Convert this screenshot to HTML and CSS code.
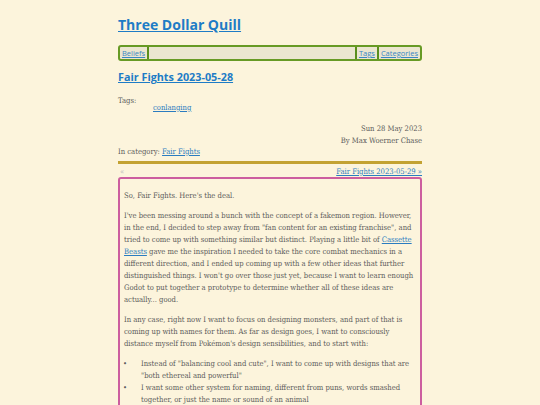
FILE: index.html
```html
<!DOCTYPE html>
<html lang="en">
<head>
<meta charset="utf-8">
<title>Fair Fights 2023-05-28 - Three Dollar Quill</title>
<link rel="stylesheet" href="styles.css">
</head>
<body>
<div class="page">
  <header class="site-header">
    <h1 class="site-title"><a href="#">Three Dollar Quill</a></h1>
    <nav class="site-nav">
      <a class="nav-item" href="#">Beliefs</a>
      <span class="nav-spacer"></span>
      <a class="nav-item sep" href="#">Tags</a>
      <a class="nav-item sep" href="#">Categories</a>
    </nav>
  </header>
  <article class="post">
    <h2 class="post-title"><a href="#">Fair Fights 2023-05-28</a></h2>
    <dl class="tags">
      <dt>Tags:</dt>
      <dd><a href="#">conlanging</a></dd>
    </dl>
    <div class="byline">
      <div>Sun 28 May 2023</div>
      <div>By Max Woerner Chase</div>
    </div>
    <div class="category">In category: <a href="#">Fair Fights</a></div>
    <div class="pager">
      <span class="prev">«</span>
      <a href="#">Fair Fights 2023-05-29 »</a>
    </div>
    <div class="content">
      <p>So, Fair Fights. Here's the deal.</p>
      <p>I've been messing around a bunch with the concept of a fakemon region. However, in the end, I decided to step away from "fan content for an existing franchise", and tried to come up with something similar but distinct. Playing a little bit of <a href="#">Cassette Beasts</a> gave me the inspiration I needed to take the core combat mechanics in a different direction, and I ended up coming up with a few other ideas that further distinguished things. I won't go over those just yet, because I want to learn enough Godot to put together a prototype to determine whether all of these ideas are actually... good.</p>
      <p>In any case, right now I want to focus on designing monsters, and part of that is coming up with names for them. As far as design goes, I want to consciously distance myself from Pokémon's design sensibilities, and to start with:</p>
      <ul>
        <li>Instead of "balancing cool and cute", I want to come up with designs that are "both ethereal and powerful"</li>
        <li>I want some other system for naming, different from puns, words smashed together, or just the name or sound of an animal</li>
      </ul>
    </div>
  </article>
</div>
</body>
</html>
```
FILE: styles.css
```css
html, body {
  margin: 0;
  padding: 0;
  background: #fcf4dc;
}
body {
  font-family: "DejaVu Serif", serif;
  font-stretch: condensed;
  color: #5b5b5b;
  font-size: 7.6px;
  line-height: 12px;
}
a {
  color: #2b7cc0;
}
.page {
  width: 304px;
  margin: 0 auto;
  padding-top: 14px;
}
.site-title {
  margin: 0;
  font-family: "Open Sans", sans-serif;
  font-stretch: normal;
  font-weight: 700;
  font-size: 14px;
  line-height: 22px;
}
.site-title a {
  color: #1e7cc6;
}
.site-nav {
  margin-top: 9px;
  display: flex;
  background: #ebe6d0;
  border: 2px solid #679a25;
  border-radius: 3px;
  height: 12px;
  align-items: stretch;
  font-family: "Open Sans", sans-serif;
  font-stretch: normal;
  font-size: 7.5px;
  line-height: 12px;
}
.nav-item {
  padding: 0 2px;
  color: #3a86c4;
}
.nav-spacer {
  flex: 1;
  border-left: 2px solid #5a8f1d;
  border-right: 2px solid #5a8f1d;
}
.nav-item.sep + .nav-item.sep {
  border-left: 2px solid #5a8f1d;
}
.post-title {
  margin: 8px 0 0;
  font-family: "Open Sans", sans-serif;
  font-stretch: normal;
  font-weight: 700;
  font-size: 10.8px;
  line-height: 16px;
}
.post-title a {
  color: #1e7cc6;
}
.tags {
  margin: 10px 0 0;
}
.tags dt {
  margin: 0;
}
.tags dd {
  margin: -5px 0 0 35px;
}
.byline {
  margin-top: 9px;
  text-align: right;
}
.category {
  margin-top: -1px;
}
.pager {
  margin-top: 3px;
  border-top: 3px solid #c3a232;
  padding-top: 2px;
  line-height: 11px;
  display: flex;
  justify-content: space-between;
}
.pager .prev {
  color: #b9b9b9;
  padding-left: 2px;
}
.content {
  margin-top: 0;
  border: 2px solid #cc5e9f;
  border-radius: 3px;
  padding: 11px 4px 6px;
  min-height: 260px;
}
.content p {
  margin: 0 0 8px;
}
.content ul {
  margin: 0;
  padding: 0;
}
.content li {
  list-style: none;
  display: flex;
}
.content li::before {
  content: "•";
  flex: none;
  width: 18px;
  margin-left: -1px;
}
```
